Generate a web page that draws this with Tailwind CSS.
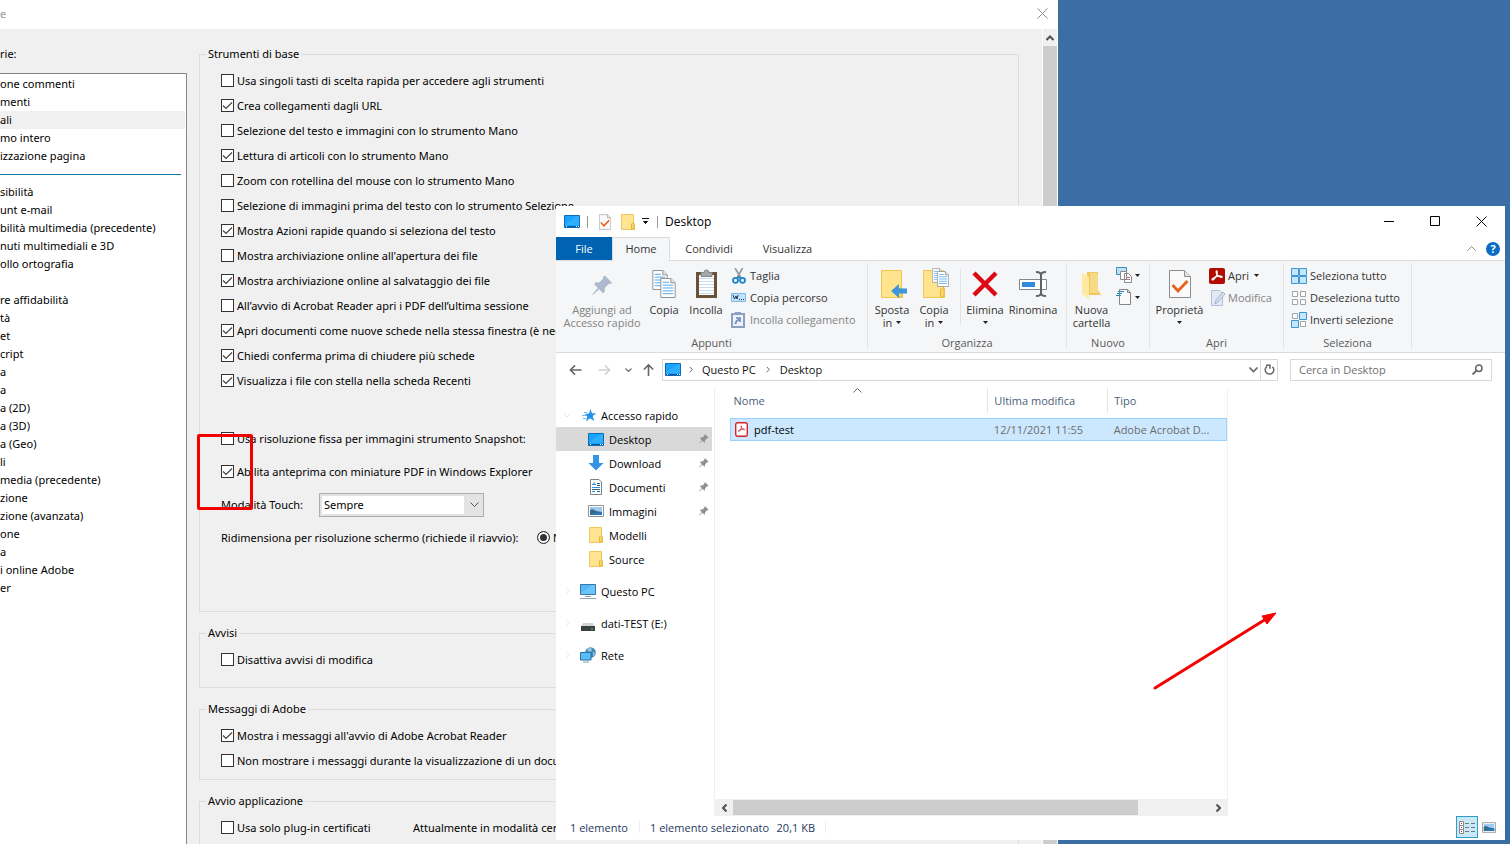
<!DOCTYPE html>
<html lang="it">
<head>
  <meta charset="UTF-8">
  <meta name="viewport" content="width=device-width, initial-scale=1.0">
  <title>Desktop</title>
  <script src="https://cdn.jsdelivr.net/npm/@tailwindcss/browser@4"></script>
</head>
<body class="relative h-screen overflow-hidden bg-[#3a6ea5] font-['Open_Sans',sans-serif] text-[11px] leading-[13px] text-black">

  <!-- Shared icons -->
  <svg class="hidden">
    <symbol id="i-desktop" viewBox="0 0 16 13"><path d="M.5.5h15v12H.5z" fill="#1aa2ff" stroke="#0b6cb5"/><path d="M1 9 13 1h2v9H1z" fill="#3db4ff" opacity=".6"/><path d="M1 11.500h14" stroke="#0a5a9c"/><path d="M2 11.500h1m9 0h1m1 0h1" stroke="#fff"/></symbol>
    <symbol id="i-folder" viewBox="0 0 14 16"><path d="M.5.500h12V9.500l1 1v5H.5z" fill="#ffe591" stroke="#efc75e"/><path d="M10.500 15v-5l1-1h1.500v6z" fill="#ffd768" stroke="#e5b73f"/></symbol>
    <symbol id="i-bigfolder" viewBox="0 0 22 28"><path d="M.5.500h20V18l1 1v8.500H.5z" fill="#ffe38d" stroke="#efc650"/><path d="M17.500 27v-8l2-1h1.500v9z" fill="#ffd768" stroke="#e5b73f"/></symbol>
    <symbol id="i-check" viewBox="0 0 22 28"><path d="M.5.500h15l6 6v21H.5z" fill="#fafafa" stroke="#8e8e8e"/><path d="M15.500.500v6h6" fill="#e3e3e3" stroke="#8e8e8e"/><path d="m3.500 15 5.500 6L18.500 11" fill="none" stroke="#e8601c" stroke-width="2.800"/></symbol>
    <symbol id="i-doc" viewBox="0 0 16 21"><path d="M.5.500h10.500l4.500 4.500v15.500H.5z" fill="#fff" stroke="#8c8c8c"/><path d="M11 .500V5h4.500" fill="#e8e8e8" stroke="#8c8c8c"/><path d="M2.500 4.500H9m-6.500 3h11m-11 3h11m-11 3h11m-11 3h11" stroke="#4ba1e8"/></symbol>
    <symbol id="i-pin" viewBox="0 0 22 22"><path d="M13.500.500 21 8l-1.800 1.500-1.400-.300-4.500 4.300.200 3.800-1.800 1.700-4.200-4.200L.8 21l-.6-.600 5.900-6.900-4-4 1.800-1.800 3.700.200 4.200-4.300-.400-1.600z" fill="currentColor"/></symbol>
    <symbol id="i-caret" viewBox="0 0 5 3"><path d="M0 0h5L2.500 3z" fill="#222"/></symbol>
    <symbol id="i-picture" viewBox="0 0 16 12"><path d="M.5.500h15v11H.5z" fill="#fff" stroke="#929292"/><path d="M2 2h12v8H2z" fill="#9ccaf2"/><path d="M2 5q3-2 6 1l6 1v3H2z" fill="#376d88"/><path d="M6 8.500 14 7v3H2z" fill="#2b7bbc"/></symbol>
    <symbol id="i-acro" viewBox="0 0 16 16"><path d="M3 11.500c-.500-1 3.500-2.700 5.500-3.200 2-.500 4.800-.400 4.600.700-.200 1-3-.200-4.600-2C7.300 5.700 6.800 3 7.600 3c1 0 .700 2.800-.500 5.300C6 10.600 3.700 13 3 11.500z" fill="none" stroke="currentColor" stroke-width="1.300"/></symbol>
    <symbol id="i-arrow" viewBox="0 0 14 12"><path d="M13.500 6H1.500m5-5-5 5 5 5" fill="none" stroke="currentColor" stroke-width="1.700"/></symbol>
    <symbol id="i-chev" viewBox="0 0 6 10"><path d="m1 1 4 4-4 4" fill="none" stroke="currentColor" stroke-width="1.500"/></symbol>
  </svg>

  <!-- Preferences dialog -->
  <section class="absolute inset-y-0 left-0 flex w-[1058px] flex-col overflow-hidden bg-[#f0f0f0] font-['Noto_Sans',sans-serif]">
    <header class="flex h-[29px] shrink-0 items-center justify-between bg-white pr-[10px] pb-[2px]">
      <h1 class="text-[#999]">e</h1>
      <button aria-label="Chiudi"><svg class="size-[11px]" viewBox="0 0 11 11"><path d="m.5.500 10 10m0-10-10 10" stroke="#8a8a8a"/></svg></button>
    </header>

    <div class="flex min-h-0 flex-1">
      <!-- Categories -->
      <div class="flex w-[187px] shrink-0 flex-col pt-[18px]">
        <h2>rie:</h2>
        <ul id="categories" class="mt-[13px] flex-1 border-t border-r border-[#828790] bg-white pt-px"></ul>
      </div>

      <!-- Options -->
      <form class="mr-[23px] ml-3 min-w-0 flex-1 pt-4">
        <fieldset class="h-[567px] border border-[#dcdcdc] pl-[21px]">
          <legend class="-ml-[15px] h-[18px] px-[2px] leading-[18px]">Strumenti di base</legend>
          <div id="base" class="pt-[5px]"></div>
          <div id="extra" class="pt-[29px]"></div>
          <div class="flex h-[33px] items-center">
            <label for="touch" class="w-[98px]">Modalità Touch:</label>
            <div class="relative flex h-6 w-[165px] border border-[#adadad] bg-[#e3e3e3] p-[2px]">
              <select id="touch" class="w-[142px] appearance-none bg-white pl-[2px]"><option>Sempre</option><option>Mai</option></select>
              <svg class="pointer-events-none absolute top-2 right-1 h-[6px] w-[9px]" viewBox="0 0 9 6"><path d="m.5.500 4 4 4-4" fill="none" stroke="#555"/></svg>
            </div>
          </div>
          <div class="flex h-[33px] items-center">
            <span class="w-[316px] whitespace-nowrap">Ridimensiona per risoluzione schermo (richiede il riavvio):</span>
            <label class="flex items-center gap-[3px]"><input type="radio" checked class="size-[13px] appearance-none rounded-full border border-[#333] bg-[#333] shadow-[inset_0_0_0_2px_white]">Nessuna scala</label>
          </div>
        </fieldset>
        <fieldset class="mt-3 border border-[#dcdcdc] pb-[15px] pl-[21px]">
          <legend class="-ml-[15px] h-[18px] px-[2px] leading-[18px]">Avvisi</legend>
          <div id="avvisi" class="pt-[5px]"></div>
        </fieldset>
        <fieldset class="mt-3 border border-[#dcdcdc] pb-[6px] pl-[21px]">
          <legend class="-ml-[15px] h-[18px] px-[2px] leading-[18px]">Messaggi di Adobe</legend>
          <div id="messaggi" class="pt-[5px]"></div>
        </fieldset>
        <fieldset class="mt-3 border border-[#dcdcdc] pb-[40px] pl-[21px]">
          <legend class="-ml-[15px] h-[18px] px-[2px] leading-[18px]">Avvio applicazione</legend>
          <div class="flex items-center pt-[5px]">
            <div id="avvio" class="w-48"></div>
            <span>Attualmente in modalità certificata: No</span>
          </div>
        </fieldset>
      </form>

      <!-- Vertical scrollbar -->
      <div class="flex w-4 flex-col border-x border-white bg-[#cdcdcd]">
        <button aria-label="Scorri su" class="flex h-[17px] items-center justify-center bg-[#f0f0f0]"><svg class="h-[6px] w-[8px]" viewBox="0 0 8 6"><path d="m.5 5 3.500-3.500L7.500 5" fill="none" stroke="#505050" stroke-width="2"/></svg></button>
      </div>
    </div>
  </section>

  <div class="absolute top-[434px] left-[197px] h-[76px] w-[56px] rounded-xs border-3 border-[#f00000]"></div>

  <!-- Explorer window -->
  <section class="absolute top-[206px] right-[5px] bottom-1 left-[556px] flex flex-col bg-white">
    <header class="flex h-[31px] shrink-0 items-center pl-2">
      <svg class="h-[13px] w-4"><use href="#i-desktop"/></svg>
      <span class="ml-[7px] h-3 w-px bg-[#999]"></span>
      <svg class="ml-[11px] h-4 w-3"><use href="#i-check"/></svg>
      <svg class="ml-[10px] h-4 w-[14px]"><use href="#i-folder"/></svg>
      <svg class="ml-[7px] h-[7px] w-[7px]" viewBox="0 0 7 7"><path d="M0 .500h7M1.500 3.500h4L3.500 5.500z" fill="#111" stroke="#111"/></svg>
      <span class="ml-[8px] h-3 w-px bg-[#999]"></span>
      <h2 class="ml-[7px] text-xs">Desktop</h2>
      <div class="ml-auto flex items-center gap-[35px] pr-[18px]">
        <button aria-label="Riduci"><svg class="size-[11px]" viewBox="0 0 11 11"><path d="M0 5.500h10" stroke="#000"/></svg></button>
        <button aria-label="Ingrandisci"><svg class="size-[11px]" viewBox="0 0 11 11"><path d="M.5.500h9v9h-9z" fill="none" stroke="#000"/></svg></button>
        <button aria-label="Chiudi"><svg class="size-[11px]" viewBox="0 0 11 11"><path d="m.5.500 10 10m0-10-10 10" stroke="#000"/></svg></button>
      </div>
    </header>

    <!-- Ribbon tabs -->
    <nav class="flex h-6 shrink-0 items-stretch border-b border-[#dadbdc] text-[#333]">
      <button class="w-14 bg-[#0063b1] text-white">File</button>
      <button class="-mb-px w-[58px] border border-b-0 border-[#dadbdc] bg-[#f5f6f7] pb-[2px]">Home</button>
      <button class="w-[78px]">Condividi</button>
      <button class="w-[79px]">Visualizza</button>
      <div class="ml-auto flex items-center gap-[10px] pr-[5px]">
        <svg class="h-[5px] w-[9px]" viewBox="0 0 9 5"><path d="m.5 4.500 4-4 4 4" fill="none" stroke="#888"/></svg>
        <button aria-label="Guida" class="size-[14px] rounded-full bg-[#0a6cc4] text-[11px] leading-[14px] font-bold text-white">?</button>
      </div>
    </nav>

    <!-- Ribbon -->
    <div class="flex h-[92px] shrink-0 border-b border-[#dadbdc] bg-[#f5f6f7] pt-[2px] pb-[3px] text-[#333]">
      <div class="flex w-[312px] flex-col justify-between border-r border-[#e2e3e4] px-[3px]">
        <div class="flex pt-[4px]">
          <button class="flex w-[86px] flex-col items-center text-[#838383]"><span class="flex h-[36px] items-center"><svg class="size-[21px] text-[#adbacb]"><use href="#i-pin"/></svg></span>Aggiungi ad<br>Accesso rapido</button>
          <button class="flex w-[38px] flex-col items-center">
            <span class="h-[36px] pt-[3px]"><svg class="h-7 w-6" viewBox="0 0 24 28"><use href="#i-doc" width="16" height="20"/><use href="#i-doc" x="8" y="8" width="16" height="20"/></svg></span>Copia</button>
          <button class="flex w-[46px] flex-col items-center">
            <span class="h-[36px] pt-[2px]"><svg class="h-[29px] w-[21px]" viewBox="0 0 21 29"><path d="M1.500 4.500h18v23h-18z" fill="#fff" stroke="#6b5138" stroke-width="3"/><path d="M3 9.500h15m-15 3h15m-15 3h15m-15 3h15m-15 3h15m-15 3h15" stroke="#c9dcee"/><path d="M5 3.500h3a2.500 2.500 0 0 1 5 0h3v4H5z" fill="#a3a8ad" stroke="#82878c"/></svg></span>Incolla</button>
          <div class="ml-[2px] flex flex-col items-start">
            <button class="flex h-[22px] items-center gap-[3px] pb-[5px]"><svg class="size-4" viewBox="0 0 16 16"><path d="M4 0 10 10M11.500 0 6 10" stroke="#8e979f" stroke-width="1.600"/><circle cx="4.500" cy="12.300" r="2.500" fill="none" stroke="#1c84c8" stroke-width="1.800"/><circle cx="11.500" cy="12.300" r="2.500" fill="none" stroke="#1c84c8" stroke-width="1.800"/><path d="m6 10.500 2-1.500 2 1.500" fill="none" stroke="#1c84c8" stroke-width="1.500"/></svg>Taglia</button>
            <button class="flex h-[22px] items-center gap-[4px] pb-[5px]"><svg class="h-[9px] w-[15px]" viewBox="0 0 15 9"><path d="M.5.500h14v8H.5z" fill="#c2e2fa" stroke="#7eb8e4"/><path d="m2 2 1.500 4L5 3l1 3 1-4" fill="none" stroke="#1b3e5c"/><path d="M8 6.500h1m1 0h1m1 0h1" stroke="#1b3e5c"/></svg>Copia percorso</button>
            <button class="flex h-[22px] items-center gap-[5px] pb-[5px] text-[#838383]"><svg class="h-4 w-[14px]" viewBox="0 0 14 16"><path d="M1 2h12v13H1z" fill="#edf1f8" stroke="#8ba0c3" stroke-width="2"/><path d="M4 0h6v3H4z" fill="#8ba0c3"/><path d="M4.500 12Q4.500 9 8 7.500M5 6h4v4" fill="none" stroke="#6b86b7" stroke-width="1.600"/></svg>Incolla collegamento</button>
          </div>
        </div>
        <p class="text-center text-[#5a5a5a]">Appunti</p>
      </div>

      <div class="flex w-[199px] flex-col justify-between border-r border-[#e2e3e4] px-[3px]">
        <div class="flex pt-[4px]">
          <button class="flex w-[42px] flex-col items-center">
            <span class="h-[36px] pt-[3px] pl-1"><svg class="h-7 w-[26px]" viewBox="0 0 26 28"><use href="#i-bigfolder" width="22" height="28"/><path d="m10 21 8-7v4.500h8v5h-8V28z" fill="#3c96dc"/></svg></span>Sposta
            <span class="flex items-center gap-1">in<svg class="h-[3px] w-[5px]"><use href="#i-caret"/></svg></span></button>
          <button class="flex w-[42px] flex-col items-center">
            <span class="h-[36px] pt-px pl-1"><svg class="h-[30px] w-[26px]" viewBox="0 0 26 30"><use href="#i-bigfolder" y="2" width="22" height="28"/><use href="#i-doc" x="9" width="11" height="15"/><use href="#i-doc" x="14" y="3" width="12" height="16"/></svg></span>Copia
            <span class="flex items-center gap-1">in<svg class="h-[3px] w-[5px]"><use href="#i-caret"/></svg></span></button>
          <span class="mt-[2px] ml-[5px] h-[55px] w-px bg-[#e2e3e4]"></span>
          <button class="flex w-12 flex-col items-center">
            <span class="h-[36px] pt-1"><svg class="size-[26px]" viewBox="0 0 26 26"><path d="m2 2 22 22m0-22L2 24" stroke="#dc0a14" stroke-width="4.500"/></svg></span>Elimina
            <span class="flex h-[13px] items-center"><svg class="h-[3px] w-[5px]"><use href="#i-caret"/></svg></span></button>
          <button class="flex w-12 flex-col items-center">
            <span class="h-[36px] pt-1"><svg class="h-[26px] w-7" viewBox="0 0 28 26"><path d="M.5 8.500h27v10H.5z" fill="#fff" stroke="#858585"/><path d="M3 11h13v5H3z" fill="#308bdc"/><path d="M17 1q5 0 5 3 0-3 5-3M22 3v20m-5 2q5 0 5-3 0 3 5 3" fill="none" stroke="#5e6469" stroke-width="2"/></svg></span>Rinomina</button>
        </div>
        <p class="text-center text-[#5a5a5a]">Organizza</p>
      </div>

      <div class="flex w-[83px] flex-col justify-between border-r border-[#e2e3e4] px-[2px]">
        <div class="flex pt-[4px]">
          <button class="flex w-[45px] flex-col items-center">
            <span class="h-[36px] pt-[5px]"><svg class="h-[27px] w-[19px]" viewBox="0 0 19 27"><path d="M5 0h11v18l3 5H5z" fill="#efc863"/><path d="M8 1h8v20H8z" fill="#f7da85"/><path d="m0 1 7 4v22l-7-5z" fill="#ffe8a0"/></svg></span>Nuova<br>cartella</button>
          <div class="flex flex-col gap-[6px] pl-[2px]">
            <button aria-label="Nuovo elemento" class="flex h-4 items-center gap-[3px]"><svg class="size-4" viewBox="0 0 16 16"><path d="M.5.500h10v7H.5z" fill="#bce0f5" stroke="#4489b2"/><path d="M4.500 4.500h6v8h-6zM8.500 6.500h4l3 3v6h-7z" fill="#fff" stroke="#8a8a8a"/><path d="M10 10.500h4m-4 2h4" stroke="#a67c8b"/></svg><svg class="h-[3px] w-[5px]"><use href="#i-caret"/></svg></button>
            <button aria-label="Accesso facilitato" class="flex h-4 items-center gap-[3px]"><svg class="size-4" viewBox="0 0 16 16"><path d="M3.500.500h8l3 3v12h-11z" fill="#fafafa" stroke="#858585"/><path d="M11.500.500v3h3" fill="none" stroke="#858585"/><path d="M2 2.500h6m-7 2h5m-6 2h5" stroke="#2488bd" stroke-width="1.200"/></svg><svg class="h-[3px] w-[5px]"><use href="#i-caret"/></svg></button>
          </div>
        </div>
        <p class="text-center text-[#5a5a5a]">Nuovo</p>
      </div>

      <div class="flex w-[134px] flex-col justify-between border-r border-[#e2e3e4] px-[2px]">
        <div class="flex pt-[4px]">
          <button class="flex w-[55px] flex-col items-center">
            <span class="h-[36px] pt-[3px]"><svg class="h-7 w-[22px]"><use href="#i-check"/></svg></span>Proprietà
            <span class="flex h-[13px] items-center"><svg class="h-[3px] w-[5px]"><use href="#i-caret"/></svg></span></button>
          <div class="flex flex-col items-start pl-[2px]">
            <button class="flex h-[22px] items-center gap-[3px] pb-[5px]"><svg class="size-4 text-white" viewBox="0 0 16 16"><rect width="16" height="16" rx="2" fill="#b30b00"/><use href="#i-acro"/></svg>Apri<svg class="ml-[2px] h-[3px] w-[5px]"><use href="#i-caret"/></svg></button>
            <button class="flex h-[22px] items-center gap-[3px] pb-[5px] text-[#838383]"><svg class="size-4" viewBox="0 0 16 16"><path d="M2.500.500h8l3 3v12h-11z" fill="#e3eaf5" stroke="#b0bfd6"/><path d="m6 14 1-4 7-8 2 2-7 8z" fill="#d6dfee" stroke="#a5b3cb"/></svg>Modifica</button>
          </div>
        </div>
        <p class="text-center text-[#5a5a5a]">Apri</p>
      </div>

      <div class="flex w-[128px] flex-col justify-between border-r border-[#e2e3e4] px-[7px]">
        <div class="flex flex-col items-start pt-[4px] whitespace-nowrap">
          <button class="flex h-[22px] items-center gap-[3px] pb-[5px]"><svg class="size-4" viewBox="0 0 16 16"><path d="M.5.500h7v7h-7zm8 0h7v7h-7zm-8 8h7v7h-7zm8 0h7v7h-7z" fill="#c5e6fb" stroke="#3c97d2"/></svg>Seleziona tutto</button>
          <button class="flex h-[22px] items-center gap-[3px] pb-[5px]"><svg class="size-4" viewBox="0 0 16 16"><path d="M1.500 1.500h5v5h-5zm8 0h5v5h-5zm-8 8h5v5h-5zm8 0h5v5h-5z" fill="#fff" stroke="#a3a3a3"/></svg>Deseleziona tutto</button>
          <button class="flex h-[22px] items-center gap-[3px] pb-[5px]"><svg class="size-4" viewBox="0 0 16 16"><path d="M1.500 1.500h5v5h-5zm8 8h5v5h-5z" fill="#fff" stroke="#a3a3a3"/><path d="M8.500.500h7v7h-7zm-8 8h7v7h-7z" fill="#c5e6fb" stroke="#3c97d2"/></svg>Inverti selezione</button>
        </div>
        <p class="text-center text-[#5a5a5a]">Seleziona</p>
      </div>
    </div>

    <!-- Address bar -->
    <div class="flex h-[35px] shrink-0 items-center px-[13px] pb-[2px]">
      <button aria-label="Indietro" class="text-[#666]"><svg class="h-3 w-[13px]"><use href="#i-arrow"/></svg></button>
      <button aria-label="Avanti" class="ml-[16px] rotate-180 text-[#d2d2d2]"><svg class="h-3 w-[13px]"><use href="#i-arrow"/></svg></button>
      <button aria-label="Percorsi recenti" class="ml-[14px]"><svg class="h-1 w-[7px]" viewBox="0 0 7 4"><path d="m.5.500 3 3 3-3" fill="none" stroke="#777" stroke-width="1.300"/></svg></button>
      <button aria-label="Su" class="ml-[10px] rotate-90 text-[#666]"><svg class="h-3 w-[13px]"><use href="#i-arrow"/></svg></button>
      <div class="ml-[7px] flex h-[22px] flex-1 items-center border border-[#d9d9d9] pl-[2px] text-[#111]">
        <svg class="h-[13px] w-4"><use href="#i-desktop"/></svg>
        <svg class="ml-[8px] h-[7px] w-1 text-[#666]"><use href="#i-chev"/></svg>
        <a href="#" class="ml-[9px]">Questo PC</a>
        <svg class="ml-[10px] h-[7px] w-1 text-[#666]"><use href="#i-chev"/></svg>
        <a href="#" class="ml-[10px]">Desktop</a>
        <svg class="ml-auto h-[6px] w-[9px]" viewBox="0 0 9 6"><path d="m.5.500 4 4 4-4" fill="none" stroke="#6b6b6b" stroke-width="1.600"/></svg>
        <button aria-label="Aggiorna" class="ml-[2px] flex h-full w-[17px] items-center justify-center border-l border-[#d9d9d9]"><svg class="size-[11px]" viewBox="0 0 11 11"><path d="M3 2.300a4.300 4.300 0 1 0 5.500.4M2 1.300h4v3.500" fill="none" stroke="#666" stroke-width="1.500"/></svg></button>
      </div>
      <div class="ml-3 flex h-[22px] w-[202px] items-center border border-[#d9d9d9] px-2">
        <input type="text" aria-label="Cerca" placeholder="Cerca in Desktop" class="min-w-0 flex-1 outline-none placeholder:text-[#707070]">
        <svg class="size-[11px]" viewBox="0 0 11 11"><circle cx="6.800" cy="4.200" r="3.200" fill="none" stroke="#666" stroke-width="1.500"/><path d="m4.500 6.500-4 4" stroke="#666" stroke-width="1.800"/></svg>
      </div>
    </div>

    <div class="flex min-h-0 flex-1">
      <!-- Navigation pane -->
      <nav class="w-[159px] shrink-0 border-r border-[#f0f0f0] pt-[15px] pr-[2px]">
        <a href="#" class="flex h-6 items-center pl-[7px]"><svg class="h-[5px] w-2" viewBox="0 0 8 5"><path d="m.5.500 3.500 3.500L7.500.500" fill="none" stroke="#e4e4e4"/></svg><svg class="ml-[11px] h-[13px] w-[14px]" viewBox="0 0 14 13"><path d="m8.500 0 1.400 4.300H14l-3.300 2.600L12.200 12 8 9.200 4 12.500l1.300-4.900L3 5l4-.500z" fill="#2392e5"/><path d="M2 3.500h3M0 6.500h4M1 9.500h3" stroke="#6dbbee"/></svg><span class="ml-[5px]">Accesso rapido</span></a>
        <a href="#" class="flex h-6 items-center bg-[#d9d9d9] pl-8"><svg class="h-[13px] w-4"><use href="#i-desktop"/></svg><span class="ml-[5px]">Desktop</span><svg class="mr-[3px] ml-auto size-[10px] text-[#8a9198]"><use href="#i-pin"/></svg></a>
        <a href="#" class="flex h-6 items-center pl-8"><svg class="size-4" viewBox="0 0 16 16"><path d="M5 0h6v8h4.500L8 15.500.5 8H5z" fill="#3692e2"/></svg><span class="ml-[5px]">Download</span><svg class="mr-[3px] ml-auto size-[10px] text-[#8a9198]"><use href="#i-pin"/></svg></a>
        <a href="#" class="flex h-6 items-center pl-8"><svg class="size-4" viewBox="0 0 16 16"><path d="M2.500.500h8.500l2.500 2.500v12.500h-11z" fill="#fff" stroke="#7d8286"/><path d="M4 5.500h4M6 3v3m-2 2.500h8m-8 4h3" stroke="#2c93dc"/><path d="M9 4.500h3m-3 2h3m-8 4h8m-3 2h3" stroke="#2b6387"/></svg><span class="ml-[5px]">Documenti</span><svg class="mr-[3px] ml-auto size-[10px] text-[#8a9198]"><use href="#i-pin"/></svg></a>
        <a href="#" class="flex h-6 items-center pl-8"><svg class="h-3 w-4"><use href="#i-picture"/></svg><span class="ml-[5px]">Immagini</span><svg class="mr-[3px] ml-auto size-[10px] text-[#8a9198]"><use href="#i-pin"/></svg></a>
        <a href="#" class="flex h-6 items-center pl-[33px]"><svg class="h-4 w-[14px]"><use href="#i-folder"/></svg><span class="ml-[6px]">Modelli</span></a>
        <a href="#" class="flex h-6 items-center pl-[33px]"><svg class="h-4 w-[14px]"><use href="#i-folder"/></svg><span class="ml-[6px]">Source</span></a>
        <a href="#" class="mt-2 flex h-6 items-center pl-[9px]"><svg class="h-2 w-[5px] text-[#f0f0f0]"><use href="#i-chev"/></svg><svg class="ml-[10px] h-[15px] w-4" viewBox="0 0 16 15"><path d="M.5.500h15v10H.5z" fill="#55b9f8" stroke="#3978a6"/><path d="M1 9 13 1h2v9H1z" fill="#84d0ff" opacity=".5"/><path d="M5 12.500h6m-11 2h16" stroke="#8fa2b5"/></svg><span class="ml-[5px]">Questo PC</span></a>
        <a href="#" class="mt-2 flex h-6 items-center pl-[9px]"><svg class="h-2 w-[5px] text-[#f0f0f0]"><use href="#i-chev"/></svg><svg class="ml-[10px] size-4" viewBox="0 0 16 16"><path d="M3 8h10l2 4H1z" fill="#d4d4d4"/><path d="M1 11h14v5H1z" fill="#3b4143"/><path d="M11 14h2" stroke="#4fe04f"/></svg><span class="ml-[5px]">dati-TEST (E:)</span></a>
        <a href="#" class="mt-2 flex h-6 items-center pl-[9px]"><svg class="h-2 w-[5px] text-[#f0f0f0]"><use href="#i-chev"/></svg><svg class="ml-[10px] size-4" viewBox="0 0 16 16"><circle cx="10.500" cy="5.500" r="5.300" fill="#3f8ab9"/><path d="M7 2q3-2 5 0L11 5 8 4zM13 4l2 3-2 3z" fill="#9cc7da"/><path d="M.5 5.500h10.500v7.500H.5z" fill="#58bdf8" stroke="#2b71a2"/><path d="M3 15h6" stroke="#849bb0"/></svg><span class="ml-[5px]">Rete</span></a>
      </nav>

      <!-- File list -->
      <div class="relative flex w-[513px] shrink-0 flex-col border-r border-[#f0f0f0]">
        <svg class="absolute top-0 left-[138px] h-[5px] w-[9px]" viewBox="0 0 9 5"><path d="m.5 4.500 4-4 4 4" fill="none" stroke="#666"/></svg>
        <table class="ml-[15px] table-fixed border-collapse text-left">
          <thead class="text-[#4c607a]">
            <tr class="h-[25px]">
              <th class="w-[258px] pl-[3px] font-normal">Nome</th>
              <th class="w-[120px] border-l border-[#e5e5e5] pl-[6px] font-normal">Ultima modifica</th>
              <th class="w-[119px] border-l border-[#e5e5e5] pl-[6px] font-normal">Tipo</th>
            </tr>
          </thead>
          <tbody class="before:block before:h-[5px]">
            <tr class="h-[22px] border border-[#99d1ff] bg-[#cce8ff] text-[#6d6d6d]">
              <td class="text-black"><span class="flex items-center gap-[6px] pl-1"><svg class="h-[15px] w-[13px] text-[#d6242a]" viewBox="0 0 13 15"><rect x=".7" y=".7" width="11.600" height="13.600" rx="2" fill="#fff" stroke="#d6242a" stroke-width="1.400"/><use href="#i-acro" x="1.500" y="2" width="10" height="10"/></svg>pdf-test</span></td>
              <td class="pl-[6px]">12/11/2021 11:55</td>
              <td class="pl-[6px]">Adobe Acrobat D...</td>
            </tr>
          </tbody>
        </table>
        <div class="mt-auto flex h-[17px] bg-[#f0f0f0]">
          <button aria-label="Scorri a sinistra" class="flex w-[18px] items-center justify-center text-[#505050]"><svg class="h-2 w-[5px] rotate-180" viewBox="0 0 5 8"><path d="M.5.500 4 4 .5 7.500" fill="none" stroke="currentColor" stroke-width="2"/></svg></button>
          <span class="my-px w-[405px] bg-[#cdcdcd]"></span>
          <button aria-label="Scorri a destra" class="ml-auto flex w-[18px] items-center justify-center text-[#505050]"><svg class="h-2 w-[5px]" viewBox="0 0 5 8"><path d="M.5.500 4 4 .5 7.500" fill="none" stroke="currentColor" stroke-width="2"/></svg></button>
        </div>
      </div>
    </div>

    <!-- Status bar -->
    <footer class="flex h-6 shrink-0 items-center pr-[9px] pb-[2px] pl-[14px] text-[#26395f]">
      <span class="w-[69px]">1 elemento</span>
      <span class="flex h-3 w-[187px] items-center justify-between border-x border-[#ededed] px-[10px] whitespace-nowrap"><span>1 elemento selezionato</span><span>20,1 KB</span></span>
      <button aria-label="Dettagli" class="ml-auto flex h-[22px] w-[22px] items-center justify-center border border-[#2f9bc7] bg-[#cbe8f6]"><svg class="h-[13px] w-4" viewBox="0 0 16 13"><path d="M.5.500h4v4h-4zm0 4h4v4h-4zm0 4h4v4h-4z" fill="#fff" stroke="#8b8b8b"/><path d="M2 2.500h1m-1 4h1m-1 4h1" stroke="#c22"/><path d="M6 2.500h4m2 0h4m-10 4h4m2 0h4m-10 4h4m2 0h4" stroke="#6c7b83"/></svg></button>
      <button aria-label="Icone grandi" class="ml-1"><svg class="h-[11px] w-[14px]"><use href="#i-picture"/></svg></button>
    </footer>
  </section>

  <svg class="pointer-events-none absolute top-[610px] left-[1150px] h-[84px] w-[130px]" viewBox="0 0 130 84"><path d="M5 78 116 9" stroke="#f60000" stroke-width="3" stroke-linecap="round"/><path d="M126 3 112 6l5 8z" fill="#f60000" stroke="#f60000"/></svg>

<script>
  const byId = id => document.getElementById(id);

  // '-' is the separator line, '' an empty slot
  const categories = ['one commenti', 'menti', 'ali', 'mo intero', 'izzazione pagina', '-', 'sibilità', 'unt e-mail',
    'bilità multimedia (precedente)', 'nuti multimediali e 3D', 'ollo ortografia', '', 're affidabilità', 'tà', 'et',
    'cript', 'a', 'a', 'a (2D)', 'a (3D)', 'a (Geo)', 'li', 'media (precedente)', 'zione', 'zione (avanzata)', 'one',
    'a', 'i online Adobe', 'er'];
  categories.forEach(name => {
    const li = document.createElement('li');
    li.className = 'h-[18px] leading-[18px] whitespace-nowrap mr-px';
    if (name === 'ali') li.className += ' bg-[#f0f0f0]';
    if (name === '-') li.innerHTML = '<hr class="relative top-[9px] mr-1 border-[#0f7ba8]">';
    else li.textContent = name;
    byId('categories').append(li);
  });

  function addChecks(id, rowClass, rows){
    byId(id).innerHTML += rows.map(([on, text]) => `
      <label class="flex ${rowClass} items-center gap-[3px] whitespace-nowrap">
        <span class="relative size-[13px]">
          <input type="checkbox" ${on ? 'checked' : ''} class="peer block size-[13px] appearance-none border border-[#333] bg-white">
          <svg class="absolute inset-0 hidden size-[13px] peer-checked:block" viewBox="0 0 13 13"><path d="m2 6.500 3 3 6-6" fill="none" stroke="#444" stroke-width="1.200"/></svg>
        </span>${text}</label>`).join('');
  }
  addChecks('base', 'h-[25px]', [
    [0, 'Usa singoli tasti di scelta rapida per accedere agli strumenti'],
    [1, 'Crea collegamenti dagli URL'],
    [0, 'Selezione del testo e immagini con lo strumento Mano'],
    [1, 'Lettura di articoli con lo strumento Mano'],
    [0, 'Zoom con rotellina del mouse con lo strumento Mano'],
    [0, 'Selezione di immagini prima del testo con lo strumento Selezione'],
    [1, 'Mostra Azioni rapide quando si seleziona del testo'],
    [0, "Mostra archiviazione online all'apertura dei file"],
    [1, 'Mostra archiviazione online al salvataggio dei file'],
    [0, "All’avvio di Acrobat Reader apri i PDF dell’ultima sessione"],
    [1, 'Apri documenti come nuove schede nella stessa finestra (è necessario il riavvio)'],
    [1, 'Chiedi conferma prima di chiudere più schede'],
    [1, 'Visualizza i file con stella nella scheda Recenti'],
  ]);
  addChecks('extra', 'h-[33px]', [
    [0, 'Usa risoluzione fissa per immagini strumento Snapshot:'],
    [1, 'Abilita anteprima con miniature PDF in Windows Explorer'],
  ]);
  addChecks('avvisi', 'h-[25px]', [[0, 'Disattiva avvisi di modifica']]);
  addChecks('messaggi', 'h-[25px]', [
    [1, "Mostra i messaggi all'avvio di Adobe Acrobat Reader"],
    [0, 'Non mostrare i messaggi durante la visualizzazione di un documento'],
  ]);
  addChecks('avvio', 'h-[25px]', [[0, 'Usa solo plug-in certificati']]);
</script>
</body>
</html>
